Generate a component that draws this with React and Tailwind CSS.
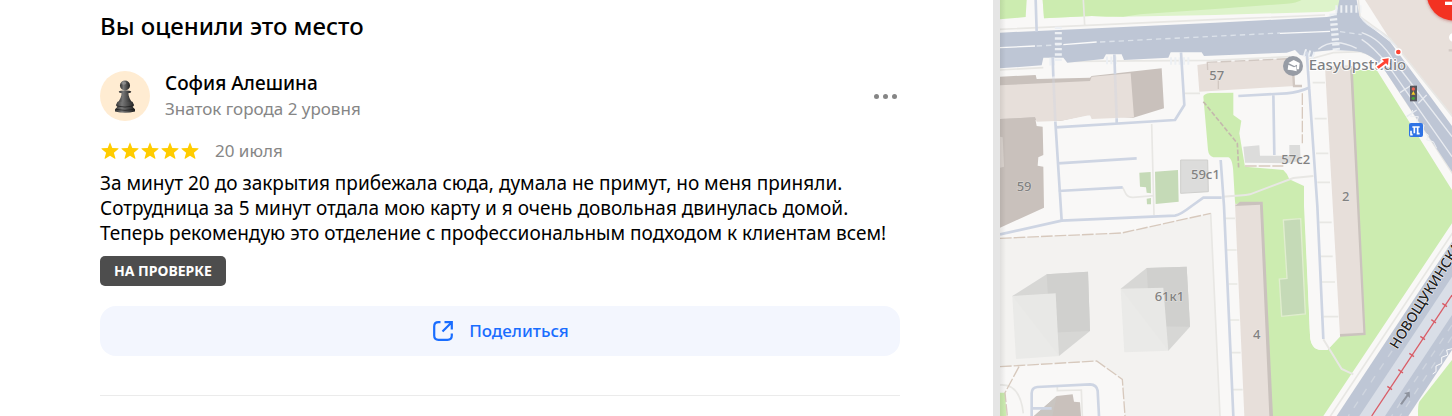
import React from "react";

function Star() {
  return (
    <svg viewBox="0 0 20 20" className="size-5 fill-[#fc0]" aria-hidden="true">
      <path d="M10 1.2 12.300 6.900 18.200 7.300a.4.4 0 0 1 .2.7L13.900 11.800 15.400 17.200a.4.4 0 0 1-.6.5L10 14.700 5.200 17.700a.4.4 0 0 1-.6-.5L6.100 11.800 1.600 8a.4.4 0 0 1 .2-.7L7.700 6.900Z" />
    </svg>
  );
}

function Pawn() {
  return (
    <svg viewBox="0 0 60 60" className="size-full" aria-hidden="true">
      <defs>
        <linearGradient id="pawn" x1="0" x2="1">
          <stop offset="0" stopColor="#303030" />
          <stop offset=".35" stopColor="#777" />
          <stop offset="1" stopColor="#1d1d1d" />
        </linearGradient>
      </defs>
      <g fill="url(#pawn)">
        <path d="M26 25h8c0 6 2 10 5 13H21c3-3 5-7 5-13Z" />
        <ellipse cx="30" cy="25" rx="7.500" ry="2" />
        <circle cx="30" cy="17.500" r="6" />
        <path d="M21 37h18l2 4-2 2 3 3v2.500q-12 3-24 0V46l3-3-2-2Z" />
      </g>
      <path d="M20 42q10 2.500 20 0M19 46q11 2.500 22 0" fill="none" stroke="#181818" strokeWidth=".8" />
      <ellipse cx="28.500" cy="14.500" rx="3" ry="2" fill="#a0a0a0" opacity=".6" />
    </svg>
  );
}

function ShareIcon() {
  return (
    <svg viewBox="0 0 24 24" className="size-6" fill="none" stroke="currentColor" strokeWidth="2.200" aria-hidden="true">
      <path d="M9.500 3.200H7.500Q3.200 3.200 3.200 7.500v9q0 4.300 4.300 4.300h9q4.300 0 4.300-4.300V14.500" />
      <path d="M11.500 12.500 20 4M13.500 3.200h7.300v7.300" />
    </svg>
  );
}

const label = "fill-[#818181] font-medium text-[39px]";

function CityMap() {
  return (
    <svg
      viewBox="0 0 1356 1248"
      preserveAspectRatio="xMinYMin slice"
      className="block size-full bg-[#f9f8f7] font-['Noto_Sans',sans-serif]"
      role="img"
      aria-label="Карта"
    >
      <defs>
        <linearGradient id="edge" x1="0" x2="1">
          <stop offset="0" stopOpacity=".08" />
          <stop offset="1" stopOpacity="0" />
        </linearGradient>
        <filter id="pinShadow" x="-30%" y="-30%" width="160%" height="160%">
          <feDropShadow dx="0" dy="3" stdDeviation="5" floodColor="#a33" floodOpacity=".5" />
        </filter>
      </defs>
      <rect width="1356" height="1248" fill="#f9f8f7" />

      {/* parks */}
      <g fill="#ccecb0">
        <path d="M0 0H80L77 51 0 58Z" />
        <path d="M128 0H1022L1018 15Q1008 33 985 35L645 45 320 51 275 48 132 55Z" fill="#ddf3ca" />
        <path d="M128 0H905Q890 9 860 11L645 27 420 43 370 50 275 48 132 55Z" />
        <path d="M610 290Q610 282 630 279L700 278V345L724 362 718 400 735 500 850 510Q862 520 868 538L912 558V618L930 1005Q932 1050 965 1050H982L1025 1004V210H1130L1356 570V670L970 1248H815L705 605 700 520Q698 475 685 472H640Q626 468 624 450Z" />
        <path d="M912 558 930 1005Q932 1050 965 1050H982L1025 1004 975 200H910Z" fill="#f9f8f7" />
        <path d="M0 1178H15L20 1248H0Z" />
        <path d="M1356 1080 1258 1205Q1253 1215 1254 1248H1356Z" />
      </g>
      <path d="M1095 0H1356V348L1170 118Z" fill="#e8e0db" />
      <path d="M0 715 365 699 632 640 660 1248H375L367 1138 290 1083 0 1100Z" fill="#f3f2f0" />

      {/* thin footpaths */}
      <g fill="none" stroke="#e8e7e4" strokeWidth="5">
        <path d="M0 88 640 59 975 45M250 0 254 75M0 210 130 203M200 184 640 181 870 170M455 372 462 645M368 562 378 582Q385 593 400 592L462 587M555 280H600" />
        <path d="M632 640 660 1248M938 248H975M944 356H980M948 460H985M952 547H990M958 667H995M962 769H998M966 846H1005M970 950H1015M675 655H705M680 750H710M685 852H712M690 960H718M693 1058H722M698 1169H728" />
        <path d="M172 1160V1172L244 1170 247 1248M0 1155Q60 1150 70 1240" />
        <path d="M668 590Q730 587 750 583L880 534 940 528M970 1018 1025 1107 1060 1123" strokeWidth="6" />
        <path d="M920 180 1000 158 1085 155M1360 695 980 1265" />
        <path d="M1085 157Q1130 165 1160 215L1370 540M1075 0 1080 50 1170 115 1370 365" />
      </g>
      <g fill="none" stroke="#d7c9bd" strokeWidth="4" strokeDasharray="35 6">
        <path d="M0 715 365 699 632 640M0 1100 290 1083 367 1138 375 1248M57 1100 15 1178 22 1248M907 280V430M735 498H850" />
        <path d="M610 305 712 430 716 505" strokeDasharray="14 6" stroke="#c4b9ad" strokeWidth="5" />
      </g>

      {/* roads */}
      <path
        d="M0 98 645 68 980 51Q1002 50 1010 40L1018 0H1070L1078 48Q1085 62 1170 125L1356 378V515L1150 205Q1110 155 1060 153L1000 150 945 155 935 170 900 165 885 150 860 158 612 168 605 157H512L505 173 372 180 365 163H318L310 177 202 188 190 173H130L125 196 0 205Z"
        fill="#bec6d5"
      />
      <path d="M1356 725 1010 1248H1225L1356 1050Z" fill="#bec6d5" />
      <path d="M1356 830 1078 1248H1155L1356 945Z" fill="#d9dee7" />
      <g fill="none" stroke="#fafafa" strokeWidth="4">
        <path d="M0 143 105 138M190 134 290 126M840 100 990 94" />
        <path d="M110 138 190 134M300 126 840 99M1020 95 1085 104" strokeDasharray="16 12" stroke="#dce2ea" />
        <path d="M1085 98Q1140 115 1180 180L1356 410M1085 118Q1120 140 1160 190L1356 470M955 148Q1000 110 1070 145M1082 50Q1095 75 1140 95L1190 140" stroke="#e8ebf0" />
        <path d="M1200 278 1235 255M1255 310 1280 285M1220 350 1250 330" stroke="#e8ebf0" />
        <path d="M1238 330 1232 350 1255 350 1250 370 1272 375 1268 395 1285 405 1280 420 1300 425 1310 445" stroke="#eef0f3" strokeWidth="3" />
        <path d="M1356 785 1045 1248M1356 975 1175 1248M1356 1010 1200 1248" stroke="#cfd5df" strokeDasharray="22 24" />
        <path d="M1360 1045 1340 1050 1343 1065 1325 1072 1325 1090 1308 1098 1308 1115 1298 1122" strokeWidth="3" />
      </g>
      <g fill="none" stroke="#edf0f4">
        <path d="M175 80V188" strokeWidth="21" strokeDasharray="7 9" />
        <path d="M999 40 1009 150" strokeWidth="22" strokeDasharray="7 8" />
        <path d="M1006 27H1084" strokeWidth="22" strokeDasharray="6 9" />
        <path d="M148 185H165M318 181H356M510 183H572M912 158 945 168" strokeWidth="23" strokeDasharray="6 7" />
      </g>
      <path d="M1356 885 1115 1248" stroke="#d95c66" strokeWidth="4" />
      <path d="m1327 910 14 10m-47 39 14 10m-47 40 14 10m-47 41 14 10m-47 39 14 10m-47 40 14 10" stroke="#d95c66" strokeWidth="4" />
      <path d="m1200 1212 20-28-8-5 17-4 1 19-6-5-18 25Z" fill="#8d929d" />

      {/* buildings */}
      <path d="M0 230 107 225 110 237 270 233 275 228 485 205 492 325 400 353 260 345 180 363 0 357Z" fill="#c9c1bc" />
      <path d="M0 256 270 243 275 230 392 220 402 352 275 357 270 345 185 362 110 365 105 352 0 357Z" fill="#e7dfda" />
      <path d="M0 357 105 352 110 378 128 380 130 465 115 472 113 497 130 500 132 623 0 683Z" fill="#c9c1bc" />
      <path d="M0 410 8 412 12 500 0 503Z" fill="#dcd5d0" />
      <path d="M592 195 645 187 878 175 885 258 598 275Z" fill="#e7dfda" />
      <path d="M620 187 870 176M622 188 623 210M655 235V270" fill="none" stroke="#d1c8c2" strokeWidth="4" strokeDasharray="32 10" />
      <path d="M878 190 882 258 906 258" fill="none" stroke="#d1c8c2" strokeWidth="7" />
      <path d="M975 200 1050 195 1095 1003 1020 1008Z" fill="#e7dfda" />
      <path d="M1050 198 1058 198 1097 1005 1020 1010 1020 1002 1090 998Z" fill="#cbc3be" />
      <path d="M705 612 780 605 815 1248H733Z" fill="#e7dfda" />
      <path d="M705 618 720 605 788 605 819 1248H808L780 614Z" fill="#cac2bd" />
      <g fill="#dcdcdb">
        <path d="M730 440 778 436 780 467 868 467V435H900L902 482 860 490 735 488Z" />
        <path d="M542 480H623L625 575 542 580Z" stroke="#cfcfcd" strokeWidth="3" />
      </g>
      <g fill="#c5dab7">
        <path d="M465 515 534 510 536 605 467 612ZM418 518 452 516 453 580 440 578 438 562 420 560ZM440 596 453 594V613H441Z" />
        <path d="M850 660 902 656 916 942 845 949 838 837 861 835Z" stroke="#e0edcf" strokeWidth="4" />
      </g>
      <path d="M37 888 140 823 264 815 270 993 177 1068Z" fill="#d7d7d5" />
      <path d="M140 823 264 815 270 993 150 998Z" fill="#d0d0ce" />
      <path d="M37 888 167 880 177 1068 48 1077Z" fill="#e9e9e7" opacity=".95" />
      <path d="M362 866 440 804 560 800 570 980 505 1052Z" fill="#d7d7d5" />
      <path d="M440 804 560 800 570 980 450 979Z" fill="#d0d0ce" />
      <path d="M362 866 490 863 505 1052 373 1057Z" fill="#e9e9e7" opacity=".95" />
      <path d="M102 1248 170 1188 218 1183 222 1205 240 1207 243 1248Z" fill="#c9c1bc" />
      <path d="M102 1248 170 1188 157 1248Z" fill="#c9c5c1" />

      {/* driveways */}
      <g fill="none" stroke="#ced5e3" strokeWidth="8" strokeLinejoin="round">
        <path d="M107 0 110 95M158 172 160 230M343 163 345 222M543 157 553 315 525 360 167 382M166 365 185 662M350 355V370M173 490 410 475M175 573 368 562" />
        <path d="M160 230 166 365M345 222 350 355" opacity=".35" />
        <path d="M0 703 185 662 525 647Q540 645 575 618L610 593H665M662 480 672 618 700 1248M920 155 952 618 970 1017M715 288 860 280Q895 278 930 262M820 280 823 465" />
        <path d="M95 1248V1180Q95 1163 112 1161L270 1153Q290 1154 293 1172L297 1248M98 1225H155" />
      </g>

      {/* house numbers and streets */}
      <g className={label} stroke="#f5f3f1" strokeOpacity=".5" strokeWidth="3" paintOrder="stroke">
        <text x="628" y="240">57</text>
        <text x="50" y="574">59</text>
        <text x="573" y="537">59с1</text>
        <text x="844" y="491">57с2</text>
        <text x="464" y="902">61к1</text>
        <text x="1026" y="604">2</text>
        <text x="759" y="1017">4</text>
      </g>
      <text x="926" y="209" className="fill-[#7d7f83] text-[45px] font-medium" stroke="#fff" strokeWidth="5" paintOrder="stroke">
        EasyUpstudio
      </text>
      <text transform="translate(1192 1050) rotate(-58)" className="fill-[#222] text-[42px] font-medium" stroke="#f5f5f5" strokeWidth="3" paintOrder="stroke">
        НОВОЩУКИНСКА
      </text>

      {/* markers */}
      <circle cx="879" cy="198" r="30" fill="#979ca5" />
      <path d="M865 189 881 180 899 189 897 208 891 208 891 194 883 198Z" fill="#fff" />
      <path d="M865 194 882 202 889 199 890 214 877 211 863 209Z" fill="#fff" />
      <path d="M1130 200 1152 184 1146 178 1166 175 1164 196 1158 190 1136 206Z" fill="#ff4433" stroke="#fff" strokeWidth="10" paintOrder="stroke" strokeLinejoin="round" />
      <circle cx="1195" cy="156" r="9" fill="#ff4433" stroke="#fff" strokeWidth="4" />
      <rect x="1230" y="257" width="21" height="47" fill="#55565c" />
      <circle cx="1240" cy="267" r="5" fill="#ed6455" />
      <path d="m1240 273 6 11h-12Z" fill="#f5cc28" />
      <circle cx="1240" cy="295" r="5" fill="#46a43b" />
      <rect x="1227" y="369" width="42" height="42" rx="6" fill="#2f73e5" />
      <path d="M1237 381H1259M1243 381V400M1253 381V400M1250 401H1259M1233 392V404H1238" fill="none" stroke="#fff" strokeWidth="5" />
      <circle cx="1362" cy="-20" r="82" fill="#f33022" filter="url(#pinShadow)" />
      <path d="M1335 10H1356" stroke="#fff" strokeWidth="10" />
      <circle cx="1360" cy="112" r="13" fill="#fff" />
      <path d="M1346 151H1356" stroke="#d4cac5" strokeWidth="7" />
      <rect width="18" height="1248" fill="url(#edge)" />
    </svg>
  );
}

export default function App() {
  return (
    <div className="grid min-h-screen grid-cols-[1000fr_452fr] bg-white font-['Noto_Sans',sans-serif] text-black">
      <main className="min-w-0 border-r-[7px] border-[#e5e5e5] pr-[93px] pl-[100px]">
        <h1 className="pt-2 text-2xl leading-9 font-medium">Вы оценили это место</h1>

        <article className="border-b border-[#ebebeb] pt-[27px] pb-[39px]">
          <header className="flex items-center">
            <div className="size-[50px] shrink-0 overflow-hidden rounded-full bg-[#ffecd2]">
              <Pawn />
            </div>
            <div className="ml-[15px] flex-1">
              <h2 className="text-[19px] leading-[25px] font-medium">София Алешина</h2>
              <p className="text-[17px] leading-[25px] text-[#868686]">Знаток города 2 уровня</p>
            </div>
            <button type="button" aria-label="Ещё" className="flex h-8 w-[30px] items-center justify-center gap-1">
              <span className="size-[5px] rounded-full bg-[#858585]" />
              <span className="size-[5px] rounded-full bg-[#858585]" />
              <span className="size-[5px] rounded-full bg-[#858585]" />
            </button>
          </header>

          <div className="mt-[18px] flex h-6 items-center">
            <div className="flex" role="img" aria-label="Оценка 5 из 5">
              <Star />
              <Star />
              <Star />
              <Star />
              <Star />
            </div>
            <time className="ml-[15px] text-[17px] leading-6 text-[#868686]">20 июля</time>
          </div>

          <p className="mt-2 text-[19px] leading-[25px]">
            За минут 20 до закрытия прибежала сюда, думала не примут, но меня приняли.
            <br />
            Сотрудница за 5 минут отдала мою карту и я очень довольная двинулась домой.
            <br />
            Теперь рекомендую это отделение с профессиональным подходом к клиентам всем!
          </p>

          <span className="mt-[10px] block w-fit rounded-[5px] bg-[#4d4d4d] px-[14px] text-[14px] leading-[30px] font-bold text-white">
            НА ПРОВЕРКЕ
          </span>

          <button
            type="button"
            className="mt-5 flex h-[50px] w-full items-center justify-center gap-[14px] rounded-2xl bg-[#f3f6fe] text-[17px] font-medium text-[#196dff]"
          >
            <ShareIcon />
            Поделиться
          </button>
        </article>
      </main>

      <aside className="min-w-0 overflow-hidden">
        <CityMap />
      </aside>
    </div>
  );
}
